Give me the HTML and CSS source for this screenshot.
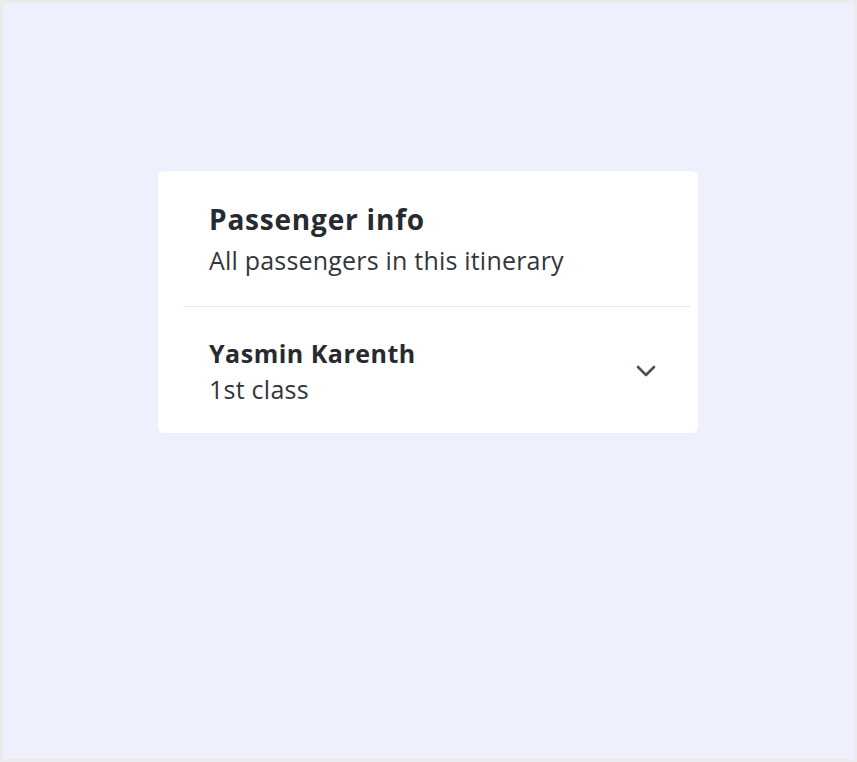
FILE: index.html
```html
<!DOCTYPE html>
<html lang="en">
<head>
<meta charset="utf-8">
<title>Passenger info</title>
<link rel="stylesheet" href="styles.css">
</head>
<body>
<main class="page">
  <section class="card">
    <header class="card-header">
      <h1 class="title">Passenger info</h1>
      <p class="subtitle">All passengers in this itinerary</p>
    </header>
    <div class="passenger">
      <div class="passenger-text">
        <div class="passenger-name">Yasmin Karenth</div>
        <div class="passenger-class">1st class</div>
      </div>
      <svg class="chevron" width="20" height="12" viewBox="0 0 20 12" aria-hidden="true">
        <path d="M2 2 L10 10 L18 2" fill="none" stroke="currentColor" stroke-width="2.6" stroke-linecap="round" stroke-linejoin="round"/>
      </svg>
    </div>
  </section>
</main>
</body>
</html>
```

FILE: styles.css
```css
* { box-sizing: border-box; }

html, body {
  margin: 0;
  padding: 0;
}

body {
  background: #ebebeb;
  font-family: "Open Sans", "Noto Sans", "Liberation Sans", sans-serif;
  color: #272a31;
}

.page {
  margin: 3px;
  height: 756px;
  background: #eef0fe;
  display: flex;
  flex-direction: column;
  align-items: flex-start;
  padding: 168px 0 0 155px;
}

.card {
  width: 540px;
  background: #ffffff;
  border-radius: 6px;
  padding: 30px 8px 0 25px;
}

.card-header {
  padding: 0 0 30px 26px;
  border-bottom: 1px solid #e5e8f0;
}

.title {
  margin: 0;
  font-size: 28px;
  line-height: 36px;
  font-weight: 700;
  letter-spacing: 0.8px;
  color: #262a31;
}

.subtitle {
  margin: 7px 0 0;
  font-size: 25px;
  line-height: 32px;
  font-weight: 400;
  letter-spacing: 0.2px;
  color: #33363c;
}

.passenger {
  display: flex;
  align-items: center;
  justify-content: space-between;
  padding: 30px 34px 28px 26px;
}

.passenger-name {
  font-size: 25px;
  line-height: 32px;
  font-weight: 700;
  letter-spacing: 0.5px;
  color: #272a31;
}

.passenger-class {
  margin-top: 4px;
  font-size: 25px;
  line-height: 32px;
  letter-spacing: 0.25px;
  color: #33363c;
}

.chevron {
  color: #4d5158;
  display: block;
}
```
